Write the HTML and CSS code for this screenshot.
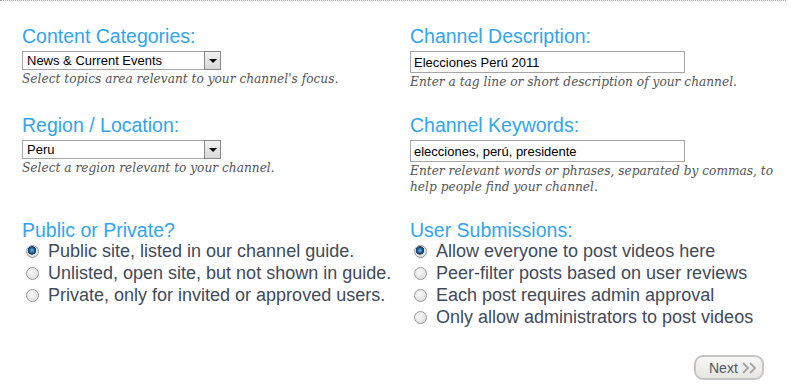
FILE: index.html
```html
<!DOCTYPE html>
<html lang="en">
  <head>
    <meta charset="UTF-8" />
    <meta name="viewport" content="width=device-width, initial-scale=1.0" />
    <title>Channel settings</title>
    <link rel="stylesheet" href="styles.css">
  </head>
  <body>
    <form class="settings">
      <div class="grid">
        <div class="field">
          <h3>Content Categories:</h3>
          <div class="select-wrap">
            <select class="select">
              <option>News &amp; Current Events</option>
            </select>
            <span class="select-arrow"></span>
          </div>
          <p class="help">Select topics area relevant to your channel's focus.</p>
        </div>
        <div class="field">
          <h3>Channel Description:</h3>
          <input class="text" type="text" value="Elecciones Perú 2011" />
          <p class="help">Enter a tag line or short description of your channel.</p>
        </div>

        <div class="field">
          <h3>Region / Location:</h3>
          <div class="select-wrap">
            <select class="select">
              <option>Peru</option>
            </select>
            <span class="select-arrow"></span>
          </div>
          <p class="help">Select a region relevant to your channel.</p>
        </div>
        <div class="field">
          <h3>Channel Keywords:</h3>
          <input class="text" type="text" value="elecciones, perú, presidente" />
          <p class="help">Enter relevant words or phrases, separated by commas, to help people find your channel.</p>
        </div>

        <div class="field">
          <h3>Public or Private?</h3>
          <div class="options">
            <label class="option"><input type="radio" name="privacy" checked /> Public site, listed in our channel guide.</label>
            <label class="option"><input type="radio" name="privacy" /> Unlisted, open site, but not shown in guide.</label>
            <label class="option"><input type="radio" name="privacy" /> Private, only for invited or approved users.</label>
          </div>
        </div>
        <div class="field">
          <h3>User Submissions:</h3>
          <div class="options">
            <label class="option"><input type="radio" name="submit" checked /> Allow everyone to post videos here</label>
            <label class="option"><input type="radio" name="submit" /> Peer-filter posts based on user reviews</label>
            <label class="option"><input type="radio" name="submit" /> Each post requires admin approval</label>
            <label class="option"><input type="radio" name="submit" /> Only allow administrators to post videos</label>
          </div>
        </div>
      </div>

      <div class="actions">
        <button type="submit" class="next">Next
          <svg width="19" height="14" viewBox="0 0 19 14"><path d="M2 2l5 5-5 5M9 2l5 5-5 5" fill="none" stroke="#a3a3a3" stroke-width="1.8"/></svg>
        </button>
      </div>
    </form>
  </body>
</html>
```

FILE: styles.css
```css
body {
  margin: 0;
  background: white;
  font-family: "Liberation Sans", Arial, sans-serif;
}
.settings {
  width: 786px;
  border-top: 1px dotted #a3a3a3;
}
.grid {
  display: grid;
  grid-template-columns: 388px 376px;
  padding: 24px 0 0 22px;
}
.field {
  margin-bottom: 24px;
}
h3 {
  margin: 0 0 4px;
  font-size: 19.5px;
  line-height: 22px;
  font-weight: normal;
  color: #33a4ef;
}
.select-wrap {
  position: relative;
  width: 199px;
  height: 19px;
}
.select {
  appearance: none;
  -webkit-appearance: none;
  width: 199px;
  height: 19px;
  margin: 0;
  padding: 0 0 0 4px;
  border: 1px solid #a6a6a6;
  border-radius: 0;
  background: white;
  font-family: "Liberation Sans", Arial, sans-serif;
  font-size: 13px;
  color: #000;
}
.select-arrow {
  position: absolute;
  top: 0;
  right: 0;
  width: 15px;
  height: 17px;
  border: 1px solid #888;
  background: linear-gradient(#f2f2f2, #d8d8d8);
  pointer-events: none;
}
.select-arrow::after {
  content: "";
  position: absolute;
  left: 4px;
  top: 7px;
  border-left: 4px solid transparent;
  border-right: 4px solid transparent;
  border-top: 4px solid #000;
}
.text {
  display: block;
  box-sizing: border-box;
  width: 275px;
  height: 22px;
  margin: 0;
  padding: 0 3px;
  border: 1px solid #a6a6a6;
  font-family: "Liberation Sans", Arial, sans-serif;
  font-size: 13px;
  color: #000;
}
.help {
  margin: 1px 0 0;
  font-family: "DejaVu Serif", Georgia, serif;
  font-style: italic;
  font-size: 12.2px;
  line-height: 16px;
  color: #555;
}
.options {
  margin-top: -5px;
}
.option {
  display: flex;
  align-items: center;
  height: 22px;
  padding-left: 4px;
  font-size: 18px;
  color: #414a58;
}
.option input {
  appearance: none;
  -webkit-appearance: none;
  box-sizing: border-box;
  width: 13px;
  height: 13px;
  margin: 0 9px 0 0;
  border: 1px solid #999;
  border-radius: 50%;
  background: radial-gradient(circle at 40% 35%, #fafafa, #d6d6d6);
}
.option input:checked {
  background: radial-gradient(circle at 45% 40%, #6fb6e8 0, #12508a 3px, #1f3f5c 4px, #e8e8e8 4.5px, #cfcfcf 100%);
}
.actions {
  display: flex;
  justify-content: flex-end;
  padding-right: 22px;
}
.next {
  display: flex;
  align-items: center;
  gap: 3px;
  width: 70px;
  height: 25px;
  margin-top: 3px;
  padding: 0 0 0 13px;
  border: 2px solid #c4c4c4;
  border-radius: 9px;
  background: linear-gradient(#f8f8f6, #e6e5e2);
  font-family: "Liberation Sans", Arial, sans-serif;
  font-size: 14px;
  color: #4d5666;
  cursor: pointer;
}
```
